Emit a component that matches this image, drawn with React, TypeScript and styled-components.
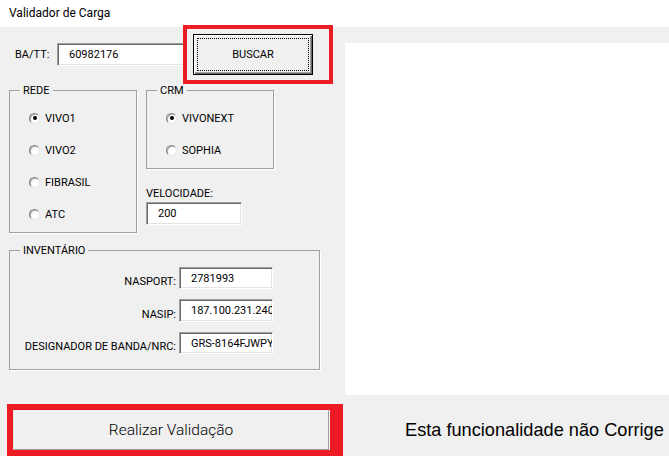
import React from "react";
import styled, { createGlobalStyle } from "styled-components";

const Global = createGlobalStyle`
  html, body { margin: 0; padding: 0; background: #f0f0f0; }
  body { font-family: Roboto, "Liberation Sans", sans-serif; color: #000; }
  * { box-sizing: border-box; }
`;

const Window = styled.div`
  position: relative;
  width: 669px;
  height: 456px;
  overflow: hidden;
  background: #f0f0f0;
  display: flex;
  flex-direction: column;
`;

const TitleBar = styled.div`
  height: 27px;
  flex: none;
  background: #fff;
  display: flex;
  align-items: center;
  padding: 0 0 2px 9px;
  font-family: Roboto, "Liberation Sans", sans-serif;
  font-size: 12px;
  color: #000;
`;

const MainRow = styled.div`
  height: 368px;
  flex: none;
  display: flex;
`;

const LeftPane = styled.div`
  width: 345px;
  flex: none;
  padding-left: 9px;
  display: flex;
  flex-direction: column;
`;

const WhitePanel = styled.div`
  flex: 1;
  margin-top: 16px;
  background: #fff;
`;

const TopRow = styled.div`
  margin-top: 7px;
  height: 41px;
  display: flex;
  align-items: center;
`;

const Label = styled.span<{ $w?: number; $ml?: number }>`
  font-size: 11px;
  line-height: 13px;
  white-space: nowrap;
  ${(p) => (p.$w ? `width: ${p.$w}px;` : "")}
  ${(p) => (p.$ml ? `margin-left: ${p.$ml}px;` : "")}
`;

const TextBox = styled.input<{ $w: number; $h?: number; $mr?: number }>`
  width: ${(p) => p.$w}px;
  height: ${(p) => p.$h ?? 23}px;
  margin: 0;
  ${(p) => (p.$mr ? `margin-right: ${p.$mr}px;` : "")}
  padding: 0 0 0 11px;
  background: #fff;
  border-style: solid;
  border-width: 1px;
  border-color: #a0a0a0 #fff #fff #a0a0a0;
  box-shadow: inset 1px 1px 0 #696969, inset -1px -1px 0 #e3e3e3;
  font-family: Roboto, "Liberation Sans", sans-serif;
  font-size: 11px;
  color: #000;
  outline: none;
`;

const SearchButton = styled.button`
  width: 120px;
  height: 41px;
  margin: 0;
  padding: 0;
  background: #f0f0f0;
  border: 1px solid #000;
  box-shadow: inset 1px 1px 0 #fff, inset -1px -1px 0 #696969, inset -2px -2px 0 #a0a0a0;
  outline: 1px dotted #000;
  outline-offset: -5px;
  font-family: Roboto, "Liberation Sans", sans-serif;
  font-size: 11px;
  color: #000;
`;

const GroupsRow = styled.div`
  margin-top: 9px;
  display: flex;
  align-items: flex-start;
  gap: 9px;
`;

const Group = styled.fieldset<{ $w: number; $pb?: number }>`
  width: ${(p) => p.$w}px;
  margin: 0;
  padding: 5px 0 ${(p) => p.$pb ?? 2}px 0;
  min-inline-size: 0;
  border: 1px solid #a0a0a0;
  box-shadow: 1px 1px 0 #fff;
`;

const Legend = styled.legend`
  margin-left: 10px;
  padding: 0 3px;
  font-size: 11px;
  line-height: 13px;
  color: #000;
`;

const RadioList = styled.div`
  padding-left: 19px;
  display: flex;
  flex-direction: column;
`;

const RadioRow = styled.label`
  height: 32px;
  display: flex;
  align-items: center;
  gap: 5px;
  font-size: 11px;
  line-height: 13px;
`;

const RadioDot = styled.span<{ $checked?: boolean }>`
  width: 11px;
  height: 11px;
  flex: none;
  border-radius: 50%;
  background: #fff;
  border: 1px solid;
  border-color: #808080 #e6e6e6 #e6e6e6 #808080;
  box-shadow: inset 1px 1px 0 #b0b0b0;
  display: flex;
  align-items: center;
  justify-content: center;
  &::after {
    content: "";
    width: 4px;
    height: 4px;
    border-radius: 50%;
    background: ${(p) => (p.$checked ? "#000" : "transparent")};
  }
`;

const RightCol = styled.div`
  width: 128px;
  display: flex;
  flex-direction: column;
`;

const SpeedLabel = styled.span`
  margin-top: 18px;
  margin-bottom: 2px;
  font-size: 11px;
  line-height: 13px;
`;

const InventoryGroup = styled(Group)`
  margin-top: 11px;
`;

const InventoryGrid = styled.div`
  padding-top: 5px;
  display: grid;
  grid-template-columns: 166px 94px;
  column-gap: 3px;
  row-gap: 10px;
`;

const FieldLabel = styled.span`
  align-self: end;
  justify-self: end;
  padding-bottom: 1px;
  font-size: 11px;
  line-height: 13px;
  white-space: nowrap;
`;

const Footer = styled.div`
  flex: 1;
  display: flex;
  align-items: center;
  padding: 15px 0 6px 13px;
`;

const ValidateButton = styled.button`
  width: 316px;
  height: 40px;
  margin: 0;
  padding: 0;
  background: #f0f0f0;
  border: 1px solid;
  border-color: #e3e3e3 #a0a0a0 #a0a0a0 #e3e3e3;
  box-shadow: inset 1px 1px 0 #fff;
  font-family: Roboto, "Liberation Sans", sans-serif;
  font-size: 15.5px;
  font-weight: 300;
  color: #000;
`;

const Notice = styled.span`
  margin-left: 76px;
  font-family: "Liberation Sans", Arial, sans-serif;
  font-size: 18.2px;
  white-space: nowrap;
  color: #000;
`;

const Highlight = styled.div<{ $l: number; $t: number; $w: number; $h: number; $bw: string }>`
  position: absolute;
  left: ${(p) => p.$l}px;
  top: ${(p) => p.$t}px;
  width: ${(p) => p.$w}px;
  height: ${(p) => p.$h}px;
  border-style: solid;
  border-color: #ed1c24;
  border-width: ${(p) => p.$bw};
  pointer-events: none;
`;

const Radio = ({ label, checked }: { label: string; checked?: boolean }) => (
  <RadioRow>
    <RadioDot $checked={checked} />
    {label}
  </RadioRow>
);

export default function App() {
  return (
    <>
      <Global />
      <Window>
        <TitleBar>Validador de Carga</TitleBar>
        <MainRow>
          <LeftPane>
            <TopRow>
              <Label $ml={6} $w={42}>BA/TT:</Label>
              <TextBox $w={130} $mr={6} readOnly value="60982176" />
              <SearchButton>BUSCAR</SearchButton>
            </TopRow>
            <GroupsRow>
              <Group $w={128}>
                <Legend>REDE</Legend>
                <RadioList>
                  <Radio label="VIVO1" checked />
                  <Radio label="VIVO2" />
                  <Radio label="FIBRASIL" />
                  <Radio label="ATC" />
                </RadioList>
              </Group>
              <RightCol>
                <Group $w={128}>
                  <Legend>CRM</Legend>
                  <RadioList>
                    <Radio label="VIVONEXT" checked />
                    <Radio label="SOPHIA" />
                  </RadioList>
                </Group>
                <SpeedLabel>VELOCIDADE:</SpeedLabel>
                <TextBox $w={96} readOnly value="200" />
              </RightCol>
            </GroupsRow>
            <InventoryGroup $w={311} $pb={15}>
              <Legend>INVENTÁRIO</Legend>
              <InventoryGrid>
                <FieldLabel>NASPORT:</FieldLabel>
                <TextBox $w={94} $h={22} readOnly value="2781993" />
                <FieldLabel>NASIP:</FieldLabel>
                <TextBox $w={94} $h={23} readOnly value="187.100.231.240" />
                <FieldLabel>DESIGNADOR DE BANDA/NRC:</FieldLabel>
                <TextBox $w={94} $h={22} readOnly value="GRS-8164FJWPYO" />
              </InventoryGrid>
            </InventoryGroup>
          </LeftPane>
          <WhitePanel />
        </MainRow>
        <Footer>
          <ValidateButton>Realizar Validação</ValidateButton>
          <Notice>Esta funcionalidade não Corrige</Notice>
        </Footer>
        <Highlight $l={183} $t={25} $w={150} $h={59} $bw="4px" />
        <Highlight $l={7} $t={404} $w={336} $h={52} $bw="6px 13px 6px 6px" />
      </Window>
    </>
  );
}
